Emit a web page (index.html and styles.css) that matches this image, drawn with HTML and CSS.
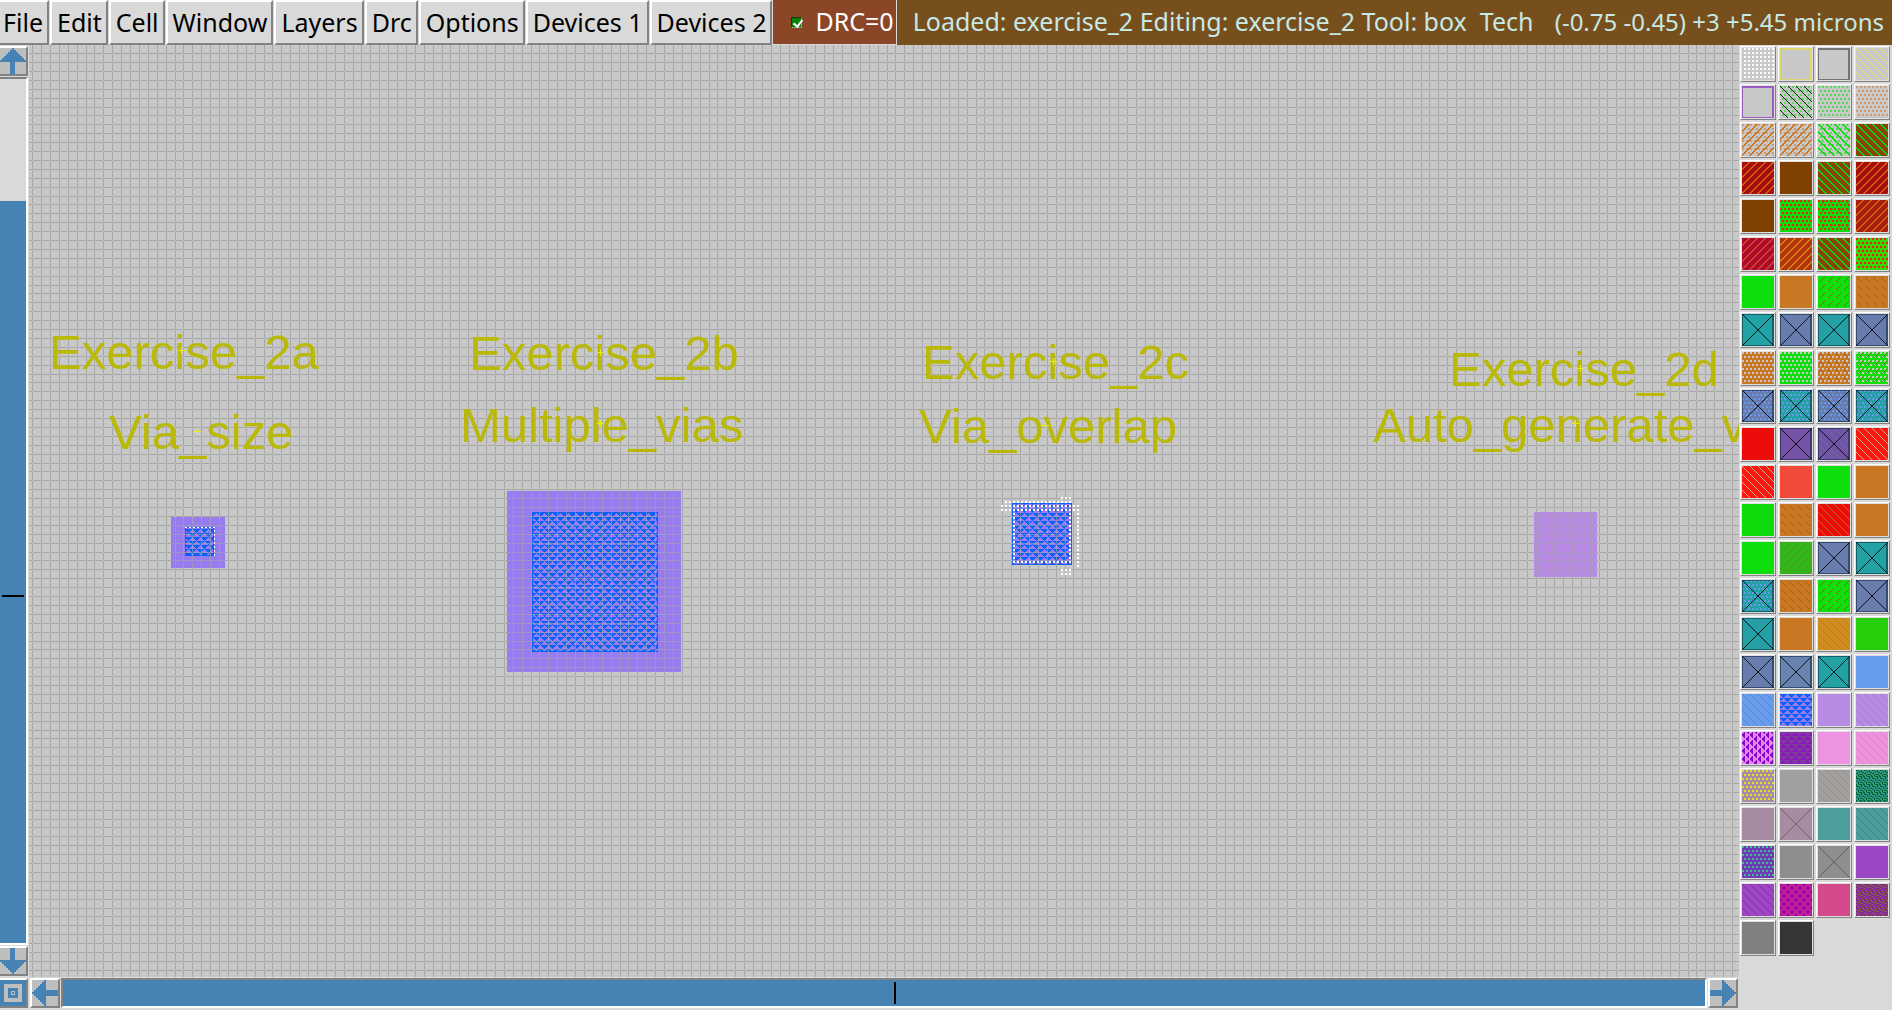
FILE: index.html
```html
<!DOCTYPE html>
<html lang="en">
<head>
<meta charset="utf-8">
<title>exercise_2</title>
<link rel="stylesheet" href="styles.css">
</head>
<body>
<header class="topbar">
  <nav class="menus" aria-label="Main menu">
    <button>File</button><button>Edit</button><button>Cell</button><button>Window</button><button>Layers</button><button>Drc</button><button>Options</button><button>Devices 1</button><button>Devices 2</button>
  </nav>
  <label class="drc"><input type="checkbox" checked><span>DRC=0</span></label>
  <div class="status">
    <span class="status-text">Loaded: exercise_2 Editing: exercise_2 Tool: box&nbsp; Tech</span>
    <span class="status-pos">(-0.75 -0.45) +3 +5.45 microns</span>
  </div>
</header>
<main class="work">
  <div class="vscroll">
    <button class="arrow" aria-label="Scroll up"><svg width="26" height="26" shape-rendering="crispEdges"><path d="M12 0h2v2h2v2h2v2h2v2h2v2h2v2h2v2H15v12h-5V14H0v-2h2v-2h2V8h2V6h2V4h2V2h2z"/></svg></button>
    <div class="trough" role="scrollbar" aria-label="Vertical" aria-valuenow="50"><div class="thumb"></div></div>
    <button class="arrow" aria-label="Scroll down"><svg width="26" height="26" shape-rendering="crispEdges"><path d="M10 0h5v12h11v2h-2v2h-2v2h-2v2h-2v2h-2v2h-2v2h-2v-2h-2v-2H8v-2H6v-2H4v-2H2v-2H0v-2h10z"/></svg></button>
  </div>
  <svg class="layout" role="img" aria-label="Layout view">
    <defs>
      <pattern id="grid" x="3" y="8" width="89" height="89" patternUnits="userSpaceOnUse">
        <path class="gridline" d="M0 0h1v89h-1zM9 0h1v89h-1zM18 0h1v89h-1zM27 0h1v89h-1zM36 0h1v89h-1zM45 0h1v89h-1zM54 0h1v89h-1zM62 0h1v89h-1zM71 0h1v89h-1zM80 0h1v89h-1zM0 0v1h89v-1zM0 9v1h89v-1zM0 18v1h89v-1zM0 27v1h89v-1zM0 36v1h89v-1zM0 45v1h89v-1zM0 54v1h89v-1zM0 62v1h89v-1zM0 71v1h89v-1zM0 80v1h89v-1z"/>
      </pattern>
      <pattern id="via" width="8" height="8" patternUnits="userSpaceOnUse">
        <path class="viafill" d="M0 0h7v1H0zM1 1h5v1H1zM2 2h3v1H2zM3 3h1v1H3zM0 4h3v1H0zM4 4h4v1H4zM0 5h2v1H0zM5 5h3v1H5zM0 6h1v1H0zM6 6h2v1H6zM7 7h1v1H7z"/>
      </pattern>
      <pattern id="err" width="4" height="4" patternUnits="userSpaceOnUse"><path class="errfill" d="M0 0h2v2H0z"/></pattern>
      <path id="cross" class="crossline" d="M-3 0h7M0-3v7"/>
    </defs>
    <rect class="canvas" width="100%" height="100%"/>
    <rect width="100%" height="100%" fill="url(#grid)"/>
    <g class="labels">
      <text x="20" y="324">Exercise_2a</text>
      <text x="80" y="404">Via_size</text>
      <text x="440" y="325">Exercise_2b</text>
      <text x="431" y="397">Multiple_vias</text>
      <text x="893" y="334">Exercise_2c</text>
      <text x="890" y="398">Via_overlap</text>
      <text x="1420" y="341">Exercise_2d</text>
      <text x="1344" y="397">Auto_generate_v</text>
    </g>
    <g>
      <rect class="metal" x="142" y="472" width="54" height="51"/>
      <rect class="metal" x="478" y="446" width="174" height="181"/>
      <rect class="metal" x="983" y="458" width="60" height="62"/>
      <rect class="metal-b" x="1505" y="467" width="63" height="65"/>
      <rect x="156" y="482" width="29" height="29" fill="url(#via)"/>
      <rect x="503" y="467" width="126" height="140" fill="url(#via)"/>
      <rect x="983" y="458" width="60" height="62" fill="url(#via)"/>
      <path class="edge" d="M156 482h28v28h-28zM503 467h125v139H503zM983 458h59v61h-59z"/>
    </g>
    <g class="over">
      <path fill="url(#grid)" d="M142 472h54v51h-54zM478 446h174v181H478zM983 458h60v62h-60zM1505 467h63v65h-63z"/>
    </g>
    <path class="errline" d="M156 482h29v29"/>
    <path fill="url(#err)" d="M971 458h81v10h-81zM976 454h68v4h-68zM1032 450h11v4h-11zM983 468h4v52h-4zM1038 468h4v52h-4zM1047 468h4v54h-4zM983 514h55v6h-55zM1032 522h11v8h-11z"/>
    <use href="#cross" x="152" y="305"/><use href="#cross" x="168" y="386"/>
    <use href="#cross" x="571" y="307"/><use href="#cross" x="571" y="378"/>
    <use href="#cross" x="1024" y="316"/><use href="#cross" x="1016" y="380"/>
    <use href="#cross" x="1551" y="323"/><use href="#cross" x="1546" y="378"/>
  </svg>
  <button class="arrow home" aria-label="Full view"><svg width="26" height="26" shape-rendering="crispEdges"><path fill-rule="evenodd" d="M0 0h26v26H0zM4 4v18h18V4zM8 8h10v10H8zM11 11v4h4v-4z"/><path d="M12 12h2v2h-2z"/></svg></button>
  <div class="hscroll">
    <button class="arrow" aria-label="Scroll left"><svg width="26" height="26" shape-rendering="crispEdges"><path d="M0 12h2v-2h2V8h2V6h2V4h2V2h2V0h2v10h12v6H14v10h-2v-2h-2v-2H8v-2H6v-2H4v-2H2v-2H0z"/></svg></button>
    <div class="trough" role="scrollbar" aria-label="Horizontal" aria-valuenow="50"><div class="thumb"></div></div>
    <button class="arrow" aria-label="Scroll right"><svg width="26" height="26" shape-rendering="crispEdges"><path d="M26 12h-2v-2h-2V8h-2V6h-2V4h-2V2h-2V0h-2v10H0v6h12v10h2v-2h2v-2h2v-2h2v-2h2v-2h2v-2h2z"/></svg></button>
  </div>
  <aside class="palette" aria-label="Layers">
    <button class="grid-dots i-white"></button><button class="frame j-yellow"></button><button class="frame j-gray"></button><button class="down i-yellow"></button>
    <button class="frame j-purple"></button><button class="dots k-green down i-black"></button><button class="dots k-green"></button><button class="dots k-orange"></button>
    <button class="dots k-orange up2 i-orange"></button><button class="dots k-orange up2 i-orange"></button><button class="dots k-green down2 i-green"></button><button class="c-brown down2 i-green"></button>
    <button class="c-dred up2 i-rust"></button><button class="c-umber"></button><button class="c-brown down2 i-green"></button><button class="c-dred up2 i-rust"></button>
    <button class="c-umber"></button><button class="c-green dots k-red"></button><button class="c-green dots k-red dash-up i-brown"></button><button class="c-brick up2 i-rust"></button>
    <button class="c-crimson up2 i-coral"></button><button class="c-rust up2 i-amber"></button><button class="c-brown down2 i-green"></button><button class="c-lime dots k-red"></button>
    <button class="c-green"></button><button class="c-orange"></button><button class="c-green dash-up i-brown"></button><button class="c-orange dash-down i-dorange"></button>
    <button class="c-teal cross"></button><button class="c-slate cross"></button><button class="c-teal cross dash-up i-slate"></button><button class="c-slate cross dash-down i-dslate"></button>
    <button class="c-orange dots k-canvas"></button><button class="c-green dots k-canvas"></button><button class="c-orange dots k-canvas dash-down i-dorange"></button><button class="c-green dots k-canvas dash-up i-brown"></button>
    <button class="c-slate dots k-sky cross"></button><button class="c-teal dots k-sky cross"></button><button class="c-slate dots k-sky cross dash-down i-dslate"></button><button class="c-teal dots k-sky cross dash-up i-slate"></button>
    <button class="c-red"></button><button class="c-violet cross"></button><button class="c-violet cross down i-dslate"></button><button class="c-scarlet down i-pale"></button>
    <button class="c-scarlet down i-pale"></button><button class="c-salmon"></button><button class="c-green"></button><button class="c-orange"></button>
    <button class="c-green dash-up i-leaf"></button><button class="c-orange dash-down i-dorange"></button><button class="c-red down i-rust"></button><button class="c-orange"></button>
    <button class="c-green"></button><button class="c-leaf up i-green"></button><button class="c-slate cross"></button><button class="c-teal cross"></button>
    <button class="c-teal dots k-sky cross"></button><button class="c-orange dash-down i-dorange"></button><button class="c-green dash-up i-brown"></button><button class="c-slate cross"></button>
    <button class="c-teal cross dash-up i-slate"></button><button class="c-orange"></button><button class="c-amber down i-damber"></button><button class="c-lgreen"></button>
    <button class="c-slate cross"></button><button class="c-lslate cross"></button><button class="c-teal cross"></button><button class="c-sky"></button>
    <button class="c-sky down i-dsky"></button><button class="c-metal tri i-blue"></button><button class="c-lilac"></button><button class="c-lilac down i-dlilac"></button>
    <button class="c-orchid vtri i-purple"></button><button class="c-plum tri i-dplum"></button><button class="c-pink"></button><button class="c-pink down i-rose"></button>
    <button class="c-mauve dots k-yellow"></button><button class="c-silver"></button><button class="c-silver down i-tan"></button><button class="c-sea maze i-forest"></button>
    <button class="c-mauve"></button><button class="c-mauve cross soft"></button><button class="c-cyan"></button><button class="c-cyan down i-dcyan"></button>
    <button class="c-indigo dots k-mint"></button><button class="c-gray"></button><button class="c-gray cross soft"></button><button class="c-amethyst"></button>
    <button class="c-amethyst down i-dameth"></button><button class="c-magenta rings i-cerise"></button><button class="c-cerise"></button><button class="c-dusk maze i-purple2"></button>
    <button class="c-mid"></button><button class="c-dark"></button>
  </aside>
</main>
</body>
</html>
```
FILE: styles.css
```css
* { box-sizing: border-box; }

body {
  margin: 0;
  height: 100vh;
  display: flex;
  flex-direction: column;
  background: #d9d9d9;
  font-family: "Noto Sans", sans-serif;
  font-size: 25px;
  overflow: hidden;
}

button {
  font: inherit;
  color: #000;
  margin: 0;
  padding: 0;
  border-radius: 0;
}

/* ---- top bar ---- */
.topbar {
  display: flex;
  flex: none;
  height: 45px;
  background: #d9d9d9;
}

.menus {
  display: flex;
  gap: 1px;
  flex: none;
  margin-left: -4px;
}

.menus button {
  height: 45px;
  padding: 0 4px 2px 5px;
  background: #d9d9d9;
  border: 2px solid;
  border-color: #fff #828282 #828282 #fff;
  line-height: 38px;
  white-space: nowrap;
}

.drc {
  display: flex;
  flex: none;
  align-items: center;
  gap: 13px;
  padding: 0 2px 0 18px;
  border: 1px solid #d9d9d9;
  border-top: 0;
  background: #8b4628;
  color: #fff;
  line-height: 42px;
}

.drc span { padding-bottom: 2px; }

.drc input {
  appearance: none;
  width: 11px;
  height: 11px;
  margin: 0;
  border: 1px solid;
  border-color: #0a3a0a #6fae6f #6fae6f #0a3a0a;
  background: #0a820a;
  position: relative;
}

.drc input:checked::after {
  content: "";
  position: absolute;
  left: 3px;
  top: 0;
  width: 4px;
  height: 7px;
  border: solid #fff;
  border-width: 0 2px 2px 0;
  transform: rotate(38deg);
}

.status {
  display: flex;
  flex: 1;
  min-width: 0;
  gap: 16px;
  padding: 0 8px 0 16px;
  background: #774f1c;
  color: #c6e8e6;
  line-height: 43px;
  white-space: nowrap;
}

.status-text { flex: 1; min-width: 0; overflow: hidden; }
.status-pos { flex: none; font-size: 24px; }

/* ---- work area ---- */
.work {
  flex: 1;
  min-height: 0;
  display: grid;
  grid-template-columns: 29px minmax(0, 1fr) 153px;
  grid-template-rows: minmax(0, 1fr) 33px;
}

.vscroll {
  grid-area: 1 / 1;
  display: flex;
  flex-direction: column;
  gap: 1px;
  padding: 1px 1px 1px 0;
  min-height: 0;
}

.hscroll {
  grid-area: 2 / 2;
  display: flex;
  gap: 1px;
  padding: 1px 1px 2px 1px;
}

.arrow {
  flex: none;
  width: 30px;
  height: 30px;
  background: #bebebe;
  border: 2px solid;
  border-color: #fff #828282 #828282 #fff;
  display: flex;
}

.arrow svg { display: block; fill: #4682b4; }

.vscroll .arrow, .home { width: 28px; border-left: 0; }
.home { grid-area: 2 / 1; margin-top: 1px; }

.trough {
  flex: 1;
  min-width: 0;
  min-height: 0;
  background: #d9d9d9;
  border: 2px solid;
  border-color: #828282 #fff #fff #828282;
  display: flex;
}

.vscroll .trough { border-left: 0; flex-direction: column; justify-content: flex-end; }

.thumb { background: #4682b4; display: flex; }
.thumb::after { content: ""; background: #000; }
.vscroll .thumb { height: 742px; max-height: 86%; padding: 394px 2px 0; }
.vscroll .thumb::after { width: 22px; height: 2px; }
.hscroll .thumb { width: 100%; align-items: center; justify-content: center; padding-left: 22px; }
.hscroll .thumb::after { width: 2px; height: 22px; }

/* ---- layout view ---- */
.layout { grid-area: 1 / 2; width: 100%; height: 100%; display: block; shape-rendering: crispEdges; }
.canvas { fill: #c8c8c8; }
.gridline { fill: #a6a6a6; }
.labels { fill: #bab900; opacity: .95; font-family: "Liberation Sans", sans-serif; font-size: 49px; }
.metal { fill: #977cef; }
.metal-b { fill: #b78ae3; }
.viafill { fill: #0862fa; }
.edge { fill: none; stroke: #0862fa; transform: translate(.5px, .5px); }
.over { opacity: .6; }
.errfill { fill: #fff; }
.errline { fill: none; stroke: #fff; stroke-width: 1; stroke-dasharray: 2 2; }
.crossline { fill: none; stroke: #eeee00; }

/* ---- layer palette ---- */
.palette {
  grid-area: 1 / 3 / 3 / 4;
  display: grid;
  grid-template-columns: repeat(4, 36px);
  grid-auto-rows: 36px;
  align-content: start;
  gap: 2px;
  padding: 1px 1px 0 1px;
}

.palette button {
  --up: url('data:image/svg+xml,<svg xmlns="http://www.w3.org/2000/svg" width="8" height="8" shape-rendering="crispEdges"><path d="M7 0h1v1H7zM6 1h1v1H6zM5 2h1v1H5zM4 3h1v1H4zM3 4h1v1H3zM2 5h1v1H2zM1 6h1v1H1zM0 7h1v1H0z"/></svg>');
  --down: url('data:image/svg+xml,<svg xmlns="http://www.w3.org/2000/svg" width="8" height="8" shape-rendering="crispEdges"><path d="M0 0h1v1H0zM1 1h1v1H1zM2 2h1v1H2zM3 3h1v1H3zM4 4h1v1H4zM5 5h1v1H5zM6 6h1v1H6zM7 7h1v1H7z"/></svg>');
  --up2: url('data:image/svg+xml,<svg xmlns="http://www.w3.org/2000/svg" width="8" height="8" shape-rendering="crispEdges"><path d="M6 0h2v1H6zM5 1h2v1H5zM4 2h2v1H4zM3 3h2v1H3zM2 4h2v1H2zM1 5h2v1H1zM0 6h2v1H0zM0 7h1v1H0zM7 7h1v1H7z"/></svg>');
  --down2: url('data:image/svg+xml,<svg xmlns="http://www.w3.org/2000/svg" width="8" height="8" shape-rendering="crispEdges"><path d="M0 0h2v1H0zM1 1h2v1H1zM2 2h2v1H2zM3 3h2v1H3zM4 4h2v1H4zM5 5h2v1H5zM6 6h2v1H6zM7 7h1v1H7zM0 7h1v1H0z"/></svg>');
  --dash-up: url('data:image/svg+xml,<svg xmlns="http://www.w3.org/2000/svg" width="8" height="8" shape-rendering="crispEdges"><path d="M6 1h1v1H6zM5 2h1v1H5zM4 3h1v1H4zM3 4h1v1H3zM2 5h1v1H2z"/></svg>');
  --dash-down: url('data:image/svg+xml,<svg xmlns="http://www.w3.org/2000/svg" width="8" height="8" shape-rendering="crispEdges"><path d="M1 1h1v1H1zM2 2h1v1H2zM3 3h1v1H3zM4 4h1v1H4zM5 5h1v1H5z"/></svg>');
  --tri: url('data:image/svg+xml,<svg xmlns="http://www.w3.org/2000/svg" width="8" height="8" shape-rendering="crispEdges"><path d="M0 0h7v1H0zM1 1h5v1H1zM2 2h3v1H2zM3 3h1v1H3zM0 4h3v1H0zM4 4h4v1H4zM0 5h2v1H0zM5 5h3v1H5zM0 6h1v1H0zM6 6h2v1H6zM7 7h1v1H7z"/></svg>');
  --vtri: url('data:image/svg+xml,<svg xmlns="http://www.w3.org/2000/svg" width="8" height="8" shape-rendering="crispEdges"><path d="M2 0h1v6H2zM1 1h1v4H1zM0 2h1v2H0zM6 4h1v4H6zM6 0h1v2H6zM5 5h1v3H5zM5 0h1v1H5zM4 6h1v2H4z"/></svg>');
  --maze: url('data:image/svg+xml,<svg xmlns="http://www.w3.org/2000/svg" width="8" height="8" shape-rendering="crispEdges"><path d="M0 0h3v1H0zM3 1h1v2H3zM5 0h1v2H5zM6 2h2v1H6zM0 3h2v1H0zM2 4h1v2H2zM4 4h3v1H4zM7 5h1v2H7zM0 6h1v2H0zM3 6h3v1H3zM5 7h1v1H5z"/></svg>');
  --rings: url('data:image/svg+xml,<svg xmlns="http://www.w3.org/2000/svg" width="8" height="8" shape-rendering="crispEdges"><path fill-rule="evenodd" d="M2 0h4v1h1v1h1v4H7v1H6v1H2V7H1V6H0V2h1V1h1zM3 2v1H2v2h1v1h2V5h1V3H5V2z"/></svg>');
  --x: url('data:image/svg+xml,<svg xmlns="http://www.w3.org/2000/svg" width="32" height="32"><path d="M0 0L32 32M32 0L0 32" stroke="black" stroke-opacity=".85"/></svg>');
  position: relative;
  width: 36px;
  height: 36px;
  border: 1px solid;
  border-color: #fff #808080 #808080 #fff;
  box-shadow: inset 0 0 0 1px #dedede;
  background-color: #c8c8c8;
  background-clip: padding-box;
}

.palette button::before,
.palette button::after { content: ""; position: absolute; inset: 1px; }

.palette .dots {
  background-image:
    conic-gradient(at 2px 2px, transparent 75%, var(--dot) 0),
    conic-gradient(at 2px 2px, transparent 75%, var(--dot) 0);
  background-size: 4px 8px;
  background-position: 1px 1px, 3px 5px;
}

.palette .grid-dots {
  background-image: conic-gradient(at 2px 2px, transparent 75%, #fff 0);
  background-size: 4px 4px;
  background-position: 3px 1px;
}

.palette .up::before { background: var(--ink); mask: var(--up); }
.palette .down::before { background: var(--ink); mask: var(--down); }
.palette .up2::before { background: var(--ink); mask: var(--up2); }
.palette .down2::before { background: var(--ink); mask: var(--down2); }
.palette .dash-up::before { background: var(--ink); mask: var(--dash-up); }
.palette .dash-down::before { background: var(--ink); mask: var(--dash-down); }
.palette .tri::before { background: var(--ink); mask: var(--tri); }
.palette .vtri::before { background: var(--ink); mask: var(--vtri); }
.palette .maze::before { background: var(--ink); mask: var(--maze); }
.palette .rings::before { background: var(--ink); mask: var(--rings); }

.palette .cross::after {
  background: var(--x);
  border: 1px solid rgba(0, 30, 50, .5);
  border-right-width: 2px;
  background-origin: border-box;
}
.palette .soft::after { opacity: .35; border-width: 0; }
.palette .frame::after { border: 1px solid var(--edge); border-top-width: 2px; border-right-width: 2px; }

.palette .c-brown { background-color: #8a420a; }
.palette .c-umber { background-color: #804000; }
.palette .c-dred { background-color: #a80c0c; }
.palette .c-brick { background-color: #ac1c0c; }
.palette .c-crimson { background-color: #b00a28; }
.palette .c-rust { background-color: #b4320c; }
.palette .c-green { background-color: #0cdf0c; }
.palette .c-lime { background-color: #34d808; }
.palette .c-lgreen { background-color: #24cf08; }
.palette .c-leaf { background-color: #3cae1e; }
.palette .c-orange { background-color: #c87822; }
.palette .c-amber { background-color: #d08c1e; }
.palette .c-teal { background-color: #22a2a4; }
.palette .c-slate { background-color: #687cae; }
.palette .c-lslate { background-color: #6884ae; }
.palette .c-red { background-color: #ec0c0c; }
.palette .c-scarlet { background-color: #fc180c; }
.palette .c-salmon { background-color: #f24a3a; }
.palette .c-violet { background-color: #7452a6; }
.palette .c-sky { background-color: #689cec; }
.palette .c-metal { background-color: #977cef; }
.palette .c-lilac { background-color: #b78ae3; }
.palette .c-orchid { background-color: #e484ee; }
.palette .c-plum { background-color: #8c18c0; }
.palette .c-pink { background-color: #ec94e2; }
.palette .c-mauve { background-color: #a68ca2; }
.palette .c-silver { background-color: #a0a0a0; }
.palette .c-sea { background-color: #2e9684; }
.palette .c-cyan { background-color: #4c9e9c; }
.palette .c-indigo { background-color: #6c3cb4; }
.palette .c-gray { background-color: #8e8e8e; }
.palette .c-amethyst { background-color: #9c48c6; }
.palette .c-magenta { background-color: #9800b4; }
.palette .c-cerise { background-color: #d24a8a; }
.palette .c-dusk { background-color: #885068; }
.palette .c-mid { background-color: #808080; }
.palette .c-dark { background-color: #363636; }

.k-green { --dot: #58d858; }
.k-orange { --dot: #d0986c; }
.k-red { --dot: #f02010; }
.k-canvas { --dot: #c8c8c8; }
.k-sky { --dot: #6898e8; }
.k-yellow { --dot: #e6dc28; }
.k-mint { --dot: #48b898; }

.j-yellow { --edge: #dcd86c; }
.j-gray { --edge: #747474; }
.j-purple { --edge: #9c5cc2; }

.i-yellow { --ink: #e2e060; }
.i-black { --ink: #102010; }
.i-orange { --ink: #c87822; }
.i-green { --ink: #0cd80c; }
.i-rust { --ink: #c86414; }
.i-coral { --ink: #c84a32; }
.i-amber { --ink: #d08414; }
.i-brown { --ink: #6a7008; }
.i-dorange { --ink: #a85c14; }
.i-slate { --ink: #4084a8; }
.i-dslate { --ink: #5878a0; }
.i-pale { --ink: #d0a8a8; }
.i-leaf { --ink: #2cb810; }
.i-damber { --ink: #c07c1c; }
.i-dsky { --ink: #5c88c4; }
.i-blue { --ink: #0862fa; }
.i-dlilac { --ink: #a874c4; }
.i-purple { --ink: #8408c8; }
.i-dplum { --ink: #7c3c98; }
.i-rose { --ink: #ec80b4; }
.i-tan { --ink: #a48c70; }
.i-forest { --ink: #0c6228; }
.i-dcyan { --ink: #3c8c7c; }
.i-dameth { --ink: #8c2c98; }
.i-cerise { --ink: #c42090; }
.i-purple2 { --ink: #8018a4; }
```
